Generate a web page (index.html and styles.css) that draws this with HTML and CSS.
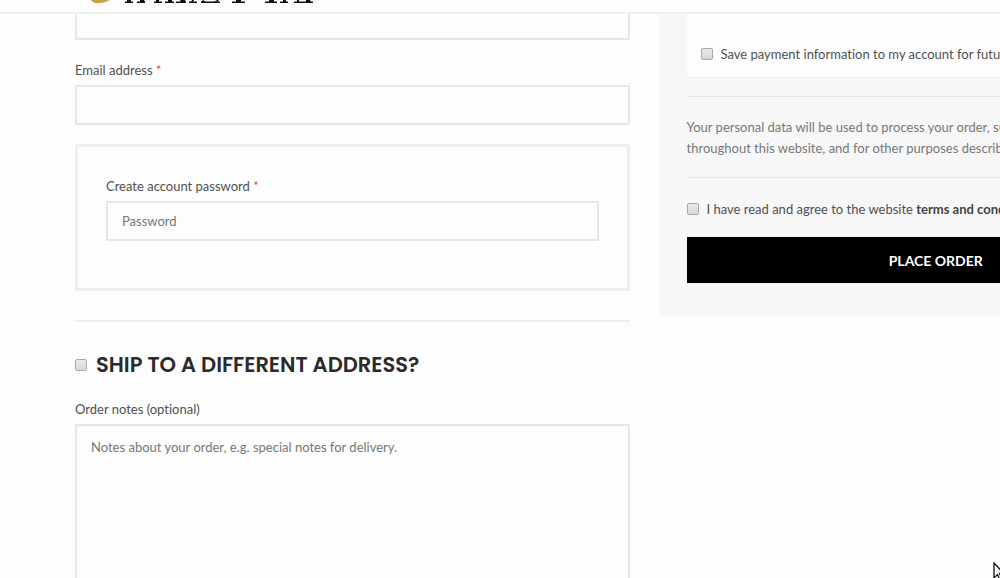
FILE: index.html
```html
<!DOCTYPE html>
<html lang="en">
<head>
<meta charset="utf-8">
<title>Checkout</title>
<link rel="stylesheet" href="styles.css">
</head>
<body>
<header class="site-header">
  <svg class="logo" width="250" height="12" viewBox="0 0 250 12" role="img" aria-label="Site logo">
    <path d="M16 0H35C32 1 29 3 25 3C20 4 17 2 16 0Z" fill="#c9a04a"/>
    <path d="M50 2.200h8M62 2.200h8M79 2.200h8M90 2.200h9M101 2.200h10M114 2.200h8M126 2.200h19M157 2.200h13M190 2.200h12M205 2.200h8M219 2.200h19" stroke="#111" stroke-width="1.600" fill="none"/>
    <path d="M52 0h4v2h-4ZM65 0h4l1 2h-5ZM81 0h3v2h-3ZM93 0h4v2h-4ZM105 0h5l1 2h-5ZM117 0h2l-1 2h-2ZM128 0l3 2h-5ZM142 0h2l-2 2h-3ZM161 0h5v2h-5ZM194 0h5v2h-5ZM208 0h3v2h-3ZM222 0h2v2h-2ZM231 0h4l1 2h-5Z" fill="#111"/>
  </svg>
</header>
<form class="checkout">
  <section class="billing">
    <input class="field" type="text" aria-label="Phone">
    <label class="label label-email" for="email">Email address <abbr class="required">*</abbr></label>
    <input class="field" type="email" id="email">
    <div class="account">
      <label class="label" for="password">Create account password <abbr class="required">*</abbr></label>
      <input class="field" type="password" id="password" placeholder="Password">
    </div>
    <hr class="rule">
    <h3 class="ship"><input class="check" type="checkbox" id="ship"><label for="ship">SHIP TO A DIFFERENT ADDRESS?</label></h3>
    <label class="label" for="notes">Order notes (optional)</label>
    <textarea class="field notes" id="notes" placeholder="Notes about your order, e.g. special notes for delivery."></textarea>
  </section>
  <section class="review">
    <div class="payment">
      <input class="check" type="checkbox" id="save"><label for="save">Save payment information to my account for future purchases.</label>
    </div>
    <p class="privacy">Your personal data will be used to process your order, support your experience throughout this website, and for other purposes described in our privacy policy.</p>
    <div class="terms">
      <input class="check" type="checkbox" id="terms"><label for="terms">I have read and agree to the website <a class="terms-link" href="#terms">terms and conditions</a></label>
    </div>
    <button class="place-order" type="button">PLACE ORDER</button>
  </section>
</form>
<svg class="pointer" width="12" height="19" viewBox="0 0 12 19" aria-hidden="true"><path d="M1 1V16L4.500 12.500L7 18L9 17L6.500 11.500H11Z" fill="#fff" stroke="#111" stroke-width="1.300"/></svg>
</body>
</html>
```
FILE: styles.css
```css
* {
  box-sizing: border-box;
}

body {
  margin: 0;
  height: 100vh;
  overflow: hidden;
  background: #fdfdfd;
  color: #505050;
  font: 13px/22px Lato, sans-serif;
  font-variant-ligatures: none;
}

.site-header {
  position: sticky;
  top: 0;
  z-index: 1;
  height: 14px;
  padding-left: 75px;
  border-bottom: 2px solid #f0f0f0;
  background: #fdfdfd;
}

.logo {
  display: block;
}

.checkout {
  display: grid;
  grid-template-columns: 1fr 1fr;
  align-items: start;
  gap: 29px;
  width: calc(100% + 213px);
  padding-left: 75px;
}

.billing {
  display: flex;
  flex-direction: column;
  margin-top: -14px;
}

.label {
  margin-bottom: 4px;
}

.label-email {
  margin-top: 19px;
}

.required {
  color: #d9534f;
}

.field {
  display: block;
  width: 100%;
  height: 40px;
  padding: 0 14px;
  border: 2px solid #e6e6e6;
  border-radius: 1px;
  background: #fdfdfd;
  color: #777;
  font: inherit;
}

.field::placeholder {
  color: #777;
  opacity: 1;
}

.account {
  display: flex;
  flex-direction: column;
  margin-top: 19px;
  padding: 28px 28px 47px;
  border: 3px solid #eee;
}

.rule {
  width: 100%;
  height: 2px;
  margin: 29px 0 28px;
  border: 0;
  background: #eee;
}

.ship {
  display: flex;
  align-items: center;
  gap: 9px;
  margin: 0 0 18px;
  color: #2d2a2a;
  font: 600 21px/30px Poppins, Inter, sans-serif;
}

.check {
  flex: none;
  appearance: none;
  width: 12px;
  height: 12px;
  margin: 0;
  border: 1px solid #aaa;
  border-radius: 2px;
  background: linear-gradient(#e8e8e8, #d8d8d8);
}

.notes {
  height: 190px;
  padding: 10px 14px;
  resize: none;
}

.review {
  padding: 0 28px 34px;
  background: #f7f7f7;
}

.payment,
.terms {
  display: flex;
  align-items: center;
  white-space: nowrap;
}

.payment {
  gap: 8px;
  padding: 29px 14px 12px;
  border-bottom: 1px solid #eee;
  background: #fdfdfd;
}

.privacy {
  margin: 18px 0 20px;
  padding: 20px 0 18px;
  border-top: 1px solid #e3e3e3;
  border-bottom: 1px solid #e3e3e3;
  color: #777;
  line-height: 21px;
}

.terms {
  gap: 8px;
  margin-bottom: 17px;
}

.terms-link {
  color: #444;
  font-weight: 700;
  text-decoration: none;
}

.place-order {
  display: block;
  width: 100%;
  height: 46px;
  padding: 0;
  border: 0;
  background: #000;
  color: #fff;
  font: 700 14px/21px Lato, sans-serif;
}

.pointer {
  position: absolute;
  left: 993px;
  top: 562px;
}
```
